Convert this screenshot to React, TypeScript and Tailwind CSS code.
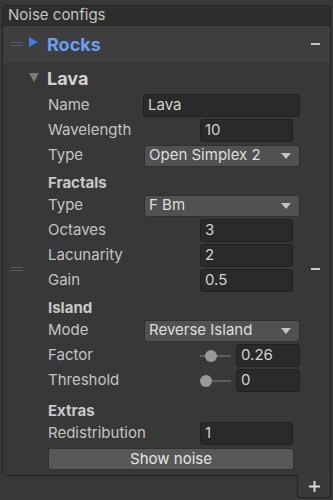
import { ReactNode } from 'react';

const font = { fontFamily: 'Inter, "Noto Sans", sans-serif' };

function DragHandle() {
  return (
    <div className="flex flex-col gap-[2px]">
      <div className="w-[13px] h-[1px] bg-[#5a5a5a]" />
      <div className="w-[13px] h-[1px] bg-[#5a5a5a]" />
    </div>
  );
}

function Minus() {
  return <div className="w-[9px] h-[2px] bg-[#c8c8c8]" />;
}

function Row({ label, children }: { label: string; children: ReactNode }) {
  return (
    <div className="h-[25px] flex items-center pl-[19px]">
      <div className="w-[95px] text-[15px] text-[#c4c4c4] shrink-0">{label}</div>
      <div className="flex-1 flex items-center">{children}</div>
    </div>
  );
}

function Section({ title, tall }: { title: string; tall?: boolean }) {
  return (
    <div
      className={`flex items-center pl-[19px] text-[15px] font-bold text-[#c8c8c8] ${
        tall ? 'h-[28px] pt-[9px]' : 'h-[25px] pt-[5px]'
      }`}
    >
      {title}
    </div>
  );
}

function TextInput({ value, wide }: { value: string; wide?: boolean }) {
  return (
    <div
      className={`h-[23px] flex items-center px-[4px] bg-[#2a2a2a] border border-[#202020] rounded-[3px] text-[15px] text-[#d2d2d2] ${
        wide ? 'w-full' : 'ml-[57px] w-[93px]'
      }`}
    >
      {value}
    </div>
  );
}

function Dropdown({ value }: { value: string }) {
  return (
    <div className="ml-[1px] h-[22px] w-full flex items-center justify-between pl-[4px] pr-[8px] bg-[#515151] border border-[#2f2f2f] rounded-[3px] text-[15px] text-[#dedede]">
      <span>{value}</span>
      <svg width="10" height="6" viewBox="0 0 10 6">
        <path d="M0 0 L10 0 L5 6 Z" fill="#c4c4c4" />
      </svg>
    </div>
  );
}

function SliderField({ value, pos }: { value: string; pos: number }) {
  return (
    <div className="flex items-center ml-[57px] w-full">
      <div className="relative w-[31px] h-[12px] flex items-center">
        <div className="w-full h-[2px] bg-[#5e5e5e]" />
        <div
          className="absolute w-[12px] h-[12px] rounded-full bg-[#999999]"
          style={{ left: pos }}
        />
      </div>
      <div className="ml-[5px] flex-1 h-[23px] flex items-center px-[4px] bg-[#2a2a2a] border border-[#202020] rounded-[3px] text-[15px] text-[#d2d2d2]">
        {value}
      </div>
    </div>
  );
}

export default function App() {
  return (
    <div className="w-[333px] h-[500px] bg-[#383838] pt-[5px] px-[2px]" style={font}>
      <div className="border border-[#242424] rounded-t-[3px] rounded-bl-[3px]">
        {/* header */}
        <div className="h-[20px] flex items-center px-[5px] bg-[#2e2e2e] border-b border-[#262626] text-[15px] text-[#c4c4c4]">
          Noise configs
        </div>

        {/* Rocks element (collapsed) */}
        <div className="h-[36px] flex items-center bg-[#3e3e3e]">
          <div className="w-[26px] flex justify-center pl-[1px]">
            <DragHandle />
          </div>
          <div className="flex-1 flex items-center">
            <svg width="9" height="10" viewBox="0 0 9 10" className="mb-[4px]">
              <path d="M0 0 L9 5 L0 10 Z" fill="#3f7ee8" />
            </svg>
            <span className="ml-[9px] text-[18px] font-bold text-[#6a9ff0]">Rocks</span>
          </div>
          <div className="w-[30px] flex justify-center">
            <Minus />
          </div>
        </div>

        {/* Lava element (expanded) */}
        <div className="flex bg-[#383838] pb-[5px]">
          <div className="w-[26px] flex items-center justify-center pl-[1px] pt-[5px]">
            <DragHandle />
          </div>
          <div className="flex-1 pt-[4px]">
            <div className="h-[24px] flex items-center">
              <svg width="10" height="9" viewBox="0 0 10 9" className="mb-[2px]">
                <path d="M0 0 L10 0 L5 9 Z" fill="#7a7a7a" />
              </svg>
              <span className="ml-[8px] text-[18px] font-bold text-[#d2d2d2]">Lava</span>
            </div>
            <div className="pt-[3px]">
              <Row label="Name">
                <TextInput value="Lava" wide />
              </Row>
              <Row label="Wavelength">
                <TextInput value="10" />
              </Row>
              <Row label="Type">
                <Dropdown value="Open Simplex 2" />
              </Row>
              <Section title="Fractals" />
              <Row label="Type">
                <Dropdown value="F Bm" />
              </Row>
              <Row label="Octaves">
                <TextInput value="3" />
              </Row>
              <Row label="Lacunarity">
                <TextInput value="2" />
              </Row>
              <Row label="Gain">
                <TextInput value="0.5" />
              </Row>
              <Section title="Island" />
              <Row label="Mode">
                <Dropdown value="Reverse Island" />
              </Row>
              <Row label="Factor">
                <SliderField value="0.26" pos={5} />
              </Row>
              <Row label="Threshold">
                <SliderField value="0" pos={0} />
              </Row>
              <Section title="Extras" tall />
              <Row label="Redistribution">
                <TextInput value="1" />
              </Row>
              <div className="pl-[19px] pr-[6px] pt-[2px]">
                <div className="h-[22px] flex items-center justify-center bg-[#585858] border border-[#303030] rounded-[3px] text-[15px] text-[#e4e4e4]">
                  Show noise
                </div>
              </div>
            </div>
          </div>
          <div className="w-[30px] flex items-center justify-center pt-[5px]">
            <Minus />
          </div>
        </div>
      </div>

      {/* add button */}
      <div className="flex justify-end">
        <div className="w-[34px] h-[23px] mt-[-1px] flex items-center justify-center bg-[#3a3a3a] border border-t-0 border-[#242424] rounded-b-[3px]">
          <svg width="11" height="11" viewBox="0 0 11 11">
            <path d="M5.5 0 V11 M0 5.5 H11" stroke="#d8d8d8" strokeWidth="2" />
          </svg>
        </div>
      </div>
    </div>
  );
}
